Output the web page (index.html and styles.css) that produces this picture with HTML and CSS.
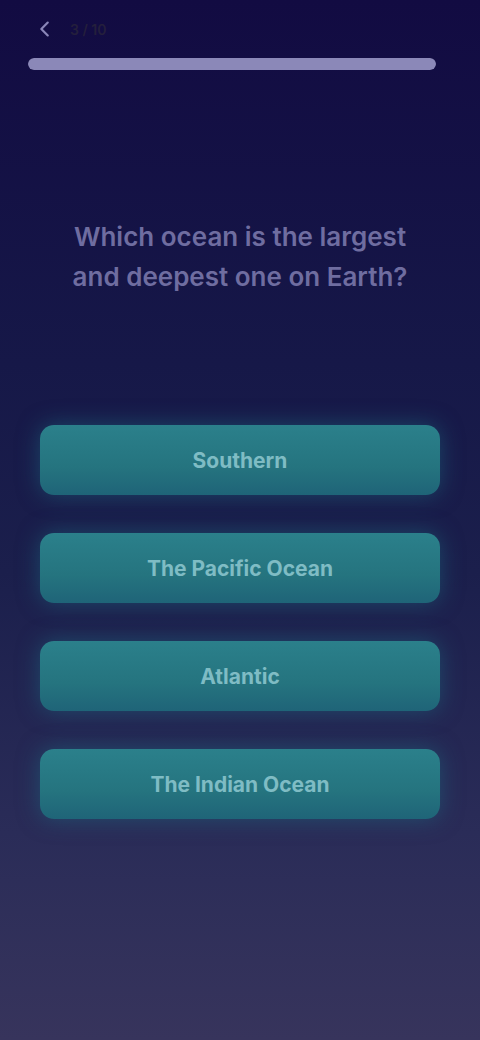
FILE: index.html
```html
<!DOCTYPE html>
<html lang="en">
<head>
<meta charset="utf-8">
<title>Quiz</title>
<link rel="stylesheet" href="styles.css">
</head>
<body>
<div class="screen">
  <header class="top">
    <div class="top-row">
      <button class="back" aria-label="Back">
        <svg viewBox="0 0 24 24" width="22" height="22"><path d="M15 5l-7 7 7 7" fill="none" stroke="currentColor" stroke-width="2.4" stroke-linecap="round" stroke-linejoin="round"/></svg>
      </button>
      <span class="count">3 / 10</span>
    </div>
    <div class="progress"><div class="progress-fill" style="width:100%"></div></div>
  </header>

  <main class="content">
    <h1 class="question">Which ocean is the largest and deepest one on Earth?</h1>

    <div class="answers">
      <button class="answer">Southern</button>
      <button class="answer">The Pacific Ocean</button>
      <button class="answer">Atlantic</button>
      <button class="answer">The Indian Ocean</button>
    </div>
  </main>
</div>
</body>
</html>
```

FILE: styles.css
```css
* { box-sizing: border-box; }
html, body { margin: 0; padding: 0; }
body {
  font-family: "Inter", "Noto Sans", "Liberation Sans", sans-serif;
  background: linear-gradient(180deg, #120b42 0%, #161848 35%, #1b1f4c 55%, #2a2c58 80%, #37345c 100%);
  min-height: 1040px;
  color: #e6e3ff;
}
.screen {
  min-height: 1040px;
  display: flex;
  flex-direction: column;
}
.top {
  padding: 14px 44px 0 28px;
}
.top-row {
  display: flex;
  align-items: center;
  gap: 14px;
  height: 30px;
}
.back {
  background: none;
  border: 0;
  padding: 0 0 0 6px;
  color: #8a86b8;
  display: flex;
  align-items: center;
}
.count {
  font-size: 14px;
  font-weight: 600;
  color: #241f3c;
}
.progress {
  margin-top: 14px;
  height: 12px;
  border-radius: 6px;
  background: rgba(255,255,255,0.2);
  overflow: hidden;
}
.progress-fill {
  height: 100%;
  border-radius: 6px;
  background: #8b88b8;
}
.content {
  padding: 0 40px;
  display: flex;
  flex-direction: column;
}
.question {
  margin: 147px 20px 0;
  font-size: 26px;
  line-height: 40px;
  font-weight: 600;
  text-align: center;
  color: #6f6da0;
}
.answers {
  margin-top: 128px;
  display: flex;
  flex-direction: column;
  gap: 38px;
}
.answer {
  height: 70px;
  border: 0;
  border-radius: 14px;
  background: linear-gradient(180deg, #2b808b 0%, #25747f 60%, #1f6478 100%);
  box-shadow: 0 0 22px rgba(30, 110, 130, 0.55);
  color: #7fbcc4;
  font-family: inherit;
  font-size: 21px;
  font-weight: 700;
}
```
